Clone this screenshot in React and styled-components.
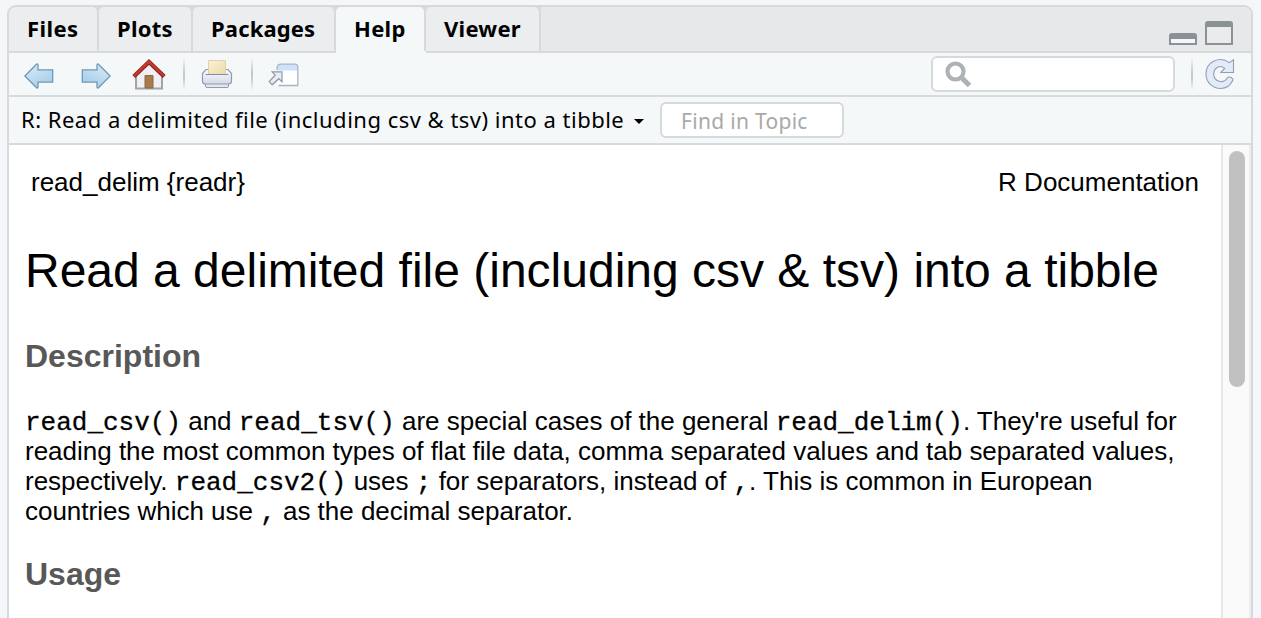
import React from "react";
import styled, { createGlobalStyle } from "styled-components";

const line = "#d6dadc";
const paper = "#f4f8f9";

const GlobalStyle = createGlobalStyle`
  *, *::before, *::after { box-sizing: border-box; }
  body { margin: 0; background: #f4f6f9; overflow: hidden; }
`;

const Screen = styled.div`
  height: 618px;
  padding: 5px 8px 0 7px;
  overflow: hidden;
  font-family: "Noto Sans", "Open Sans", sans-serif;
  color: #000;
`;

const Panel = styled.section`
  height: 640px;
  display: flex;
  flex-direction: column;
  border: 2px solid ${line};
  border-radius: 9px 9px 0 0;
  background: ${paper};
  overflow: hidden;
`;

const TabBar = styled.header`
  display: flex;
  height: 46px;
  flex: none;
  background: #e6e8ea;
  box-shadow: inset 0 -2px ${line};
`;

const Tab = styled.div`
  width: ${(p) => p.$width}px;
  height: 46px;
  padding-right: 2px;
  border-bottom: 2px solid ${(p) => (p.$active ? paper : line)};
  background: ${line};
`;

const TabFace = styled.div`
  height: 44px;
  padding-left: 18px;
  border-radius: 5px 5px 0 0;
  background: ${(p) => (p.$active ? paper : "#ebedee")};
  font-size: 22px;
  font-weight: 700;
  line-height: 42px;
  letter-spacing: ${(p) => p.$tracking}px;
  white-space: nowrap;
`;

const WindowButtons = styled.div`
  margin-left: auto;
  padding: 14px 18px 0 0;
`;

const Toolbar = styled.div`
  display: flex;
  align-items: center;
  height: 44px;
  flex: none;
  padding-left: 15px;
  padding-right: 16px;
  border-bottom: 2px solid ${line};
`;

const Icon = styled.svg`
  display: block;
  flex: none;
  margin-left: ${(p) => p.$gap || 0}px;
  margin-top: ${(p) => p.$drop || 0}px;
`;

const Divider = styled.span`
  width: 2px;
  height: 34px;
  margin-left: ${(p) => p.$gap}px;
  background: linear-gradient(#c9cccf00, #c6c9cb 45%, #c6c9cb 60%, #c9cccf00);
`;

const SearchBox = styled.div`
  display: flex;
  align-items: center;
  width: 244px;
  height: 36px;
  margin: 0 0 1px auto;
  padding-left: 12px;
  border: 2px solid ${line};
  border-radius: 6px;
  background: #fff;
`;

const TopicBar = styled.div`
  display: flex;
  align-items: center;
  height: 48px;
  flex: none;
  padding: 0 0 1px 12px;
  border-bottom: 2px solid ${line};
`;

const TopicTitle = styled.span`
  width: 613px;
  font-size: 22px;
  line-height: 30px;
  letter-spacing: 0.49px;
  padding-bottom: 1px;
  white-space: nowrap;
`;

const CaretSlot = styled.span`
  display: flex;
  margin-top: 3px;
`;

const FindBox = styled.div`
  width: 184px;
  height: 36px;
  margin-left: 16px;
  padding-left: 19px;
  border: 2px solid ${line};
  border-radius: 6px;
  background: #fff;
  color: #a9a9a9;
  font-size: 21px;
  line-height: 34px;
  letter-spacing: 0.3px;
  white-space: nowrap;
`;

const Body = styled.div`
  display: flex;
  flex: 1;
  min-height: 0;
  background: #fff;
`;

const Doc = styled.article`
  flex: 1;
  padding: 22px 22px 0 16px;
  font-family: "Liberation Sans", Arial, sans-serif;
  font-size: 26px;
  line-height: 30px;
  white-space: nowrap;
`;

const DocHeader = styled.div`
  display: flex;
  justify-content: space-between;
  padding-left: 6px;
`;

const Title = styled.h1`
  margin: 44px 0 0;
  font-size: 48px;
  font-weight: 400;
  line-height: 60px;
`;

const Heading = styled.h2`
  margin: ${(p) => p.$top}px 0 0;
  color: #585858;
  font-size: 32px;
  font-weight: 700;
  line-height: 40px;
`;

const Paragraph = styled.p`
  margin: 30px 0 0;
`;

const Line = styled.span`
  display: block;
  height: 30px;
  letter-spacing: ${(p) => p.$tracking || 0}px;
`;

const Code = styled.code`
  font-family: "Liberation Mono", monospace;
  font-size: 26px;
  line-height: 1;
  letter-spacing: 0;
  -webkit-text-stroke: 0.3px #000;
`;

const ScrollTrack = styled.div`
  width: 30px;
  padding: 6px 0 0 6px;
  border-left: 2px solid #e8e8e8;
  border-right: 2px solid #ededed;
  background: #fafafa;
`;

const ScrollThumb = styled.div`
  width: 16px;
  height: 236px;
  border-radius: 8px;
  background: #c1c1c1;
`;

const tabs = [
  { name: "Files", width: 90, tracking: 0.4 },
  { name: "Plots", width: 94, tracking: 0.25 },
  { name: "Packages", width: 143, tracking: 0.15 },
  { name: "Help", width: 90, tracking: 0.3, active: true },
  { name: "Viewer", width: 115, tracking: 0.25 },
];

function ArrowIcon({ flip, gap }) {
  return (
    <Icon $gap={gap} $drop={3} width="30" height="26" viewBox="0 0 30 26">
      <defs>
        <linearGradient id="arrowFill" x1="0" y1="0" x2="0.6" y2="1">
          <stop offset="0" stopColor="#dcecf8" />
          <stop offset="1" stopColor="#a6cdea" />
        </linearGradient>
      </defs>
      <path
        transform={flip ? "translate(30 0) scale(-1 1)" : undefined}
        d="M.9 13 12.5 1.2q1-.7 1.5.5V6.8H28.7V19.2H14V24.3q-.5 1.2-1.5.5Z"
        fill="url(#arrowFill)" stroke="#7198b5" strokeWidth="1.3"
      />
    </Icon>
  );
}

function HomeIcon({ gap }) {
  return (
    <Icon $gap={gap} $drop={2} width="34" height="32" viewBox="0 0 34 32">
      <path d="M3.5 17 17 4 30.5 17V30.5H3.5Z" fill="#f0f0f4" />
      <path d="M4 16V29.5H30V16" fill="none" stroke="#a0a5ad" strokeWidth="2" />
      <path d="M13 29V16.5H21V29Z" fill="#a67b49" stroke="#8b6840" />
      <path d="M1.8 17.6 17 3 32.2 17.6" fill="none" stroke="#8f1e19" strokeWidth="4.2" />
      <path d="M2.2 17 17 2.7 31.8 17" fill="none" stroke="#c53a31" strokeWidth="2.4" />
    </Icon>
  );
}

function PrintIcon({ gap }) {
  return (
    <Icon $gap={gap} width="32" height="30" viewBox="0 0 32 30">
      <defs>
        <linearGradient id="printerFill" x1="0" y1="0" x2="0" y2="1">
          <stop offset="0" stopColor="#fbfcff" />
          <stop offset="1" stopColor="#d3d9e5" />
        </linearGradient>
        <linearGradient id="sheetFill" x1="0" y1="0" x2="1" y2="1">
          <stop offset="0" stopColor="#fbf2d8" />
          <stop offset="1" stopColor="#eadbac" />
        </linearGradient>
      </defs>
      <path d="M4.5 24H27.5V27Q27.5 28.5 26 28.5H6Q4.5 28.5 4.5 27Z" fill="#e3e8ef" stroke="#929aae" />
      <path d="M5 10.5H27L30.5 14.5V22Q30.5 25 27.5 25H4.5Q1.5 25 1.5 22V14.5Z" fill="url(#printerFill)" stroke="#929aae" strokeWidth="1.2" />
      <path d="M7.5 15V1.5H24.5V15" fill="url(#sheetFill)" stroke="#e0d2a8" />
      <path d="M4.5 15.5H27.5" stroke="#858da2" />
    </Icon>
  );
}

function PopoutIcon({ gap }) {
  return (
    <Icon $gap={gap} $drop={3} width="31" height="26" viewBox="0 0 31 26">
      <path d="M9 2.5Q10.5 1 13 1H27Q29.7 1 29.7 4V22.5H9Z" fill="#fff" />
      <path d="M9 7.5V4.5Q10 1.5 13 1.5H27Q29.4 1.5 29.4 4V7.5Z" fill="#cde2fa" />
      <path d="M9 7V5Q9.5 1.2 13 1.2H26.5Q29.8 1.2 29.8 4.2V22.5H10.5" fill="none" stroke="#a5b5c4" strokeWidth="1.3" />
      <path d="M4.2 8.8H14V18.8L10.8 15.7 4.2 21.8 1.2 18.5 7.2 12.2Z" fill="#e9ebf5" stroke="#9299a7" strokeWidth="1.2" />
    </Icon>
  );
}

function SearchIcon() {
  return (
    <Icon $drop={2} width="27" height="27" viewBox="0 0 27 27">
      <circle cx="10.5" cy="10.5" r="8" fill="none" stroke="#adb2b4" strokeWidth="4.2" />
      <path d="m16 16 8.5 8.5" stroke="#adb2b4" strokeWidth="5.2" />
    </Icon>
  );
}

function RefreshIcon({ gap }) {
  return (
    <Icon $gap={gap} width="30" height="32" viewBox="0 0 30 32">
      <path
        d="M24.2 4.6 28.5 1.7V14.5H15.8L19.7 10.4C14.5 6 8.7 10.5 8.7 16.1C8.7 23.8 18.8 26.2 22.2 20.1C24.2 17.5 28.7 20.1 27.7 22.6C25.2 28.1 20.5 30.5 15.6 30.5C7.8 30.5 1 24.3 1 16.2C1 3.5 14.8-2.4 24.2 4.6Z"
        fill="#e2ebfa" stroke="#959daf" strokeWidth="1.1"
      />
    </Icon>
  );
}

function WindowIcons() {
  return (
    <Icon width="64" height="24" viewBox="0 0 64 24">
      <rect x="1" y="13" width="26" height="10" fill="#f4f7f8" stroke="#8a9295" strokeWidth="2" />
      <path d="M0 18V12H28V18Z" fill="#e6e8ea" />
      <path d="M0 18V15Q0 12 3 12H25Q28 12 28 15V18Z" fill="#8a9295" />
      <path d="M37 4V23H63V4" fill="#e9ebec" stroke="#8a9295" strokeWidth="2" />
      <path d="M36 6V3Q36 0 39 0H61Q64 0 64 3V6Z" fill="#8a9295" />
    </Icon>
  );
}

function Caret() {
  return (
    <svg width="10" height="5" viewBox="0 0 10 5">
      <path d="M0 0H10L5 5Z" fill="#000" />
    </svg>
  );
}

export default function App() {
  return (
    <>
      <GlobalStyle />
      <Screen>
        <Panel>
          <TabBar>
            {tabs.map((t) => (
              <Tab key={t.name} $width={t.width} $active={t.active}>
                <TabFace $tracking={t.tracking} $active={t.active}>{t.name}</TabFace>
              </Tab>
            ))}
            <WindowButtons><WindowIcons /></WindowButtons>
          </TabBar>
          <Toolbar>
            <ArrowIcon />
            <ArrowIcon flip gap={27} />
            <HomeIcon gap={21} />
            <Divider $gap={17} />
            <PrintIcon gap={16} />
            <Divider $gap={18} />
            <PopoutIcon gap={15} />
            <SearchBox><SearchIcon /></SearchBox>
            <Divider $gap={16} />
            <RefreshIcon gap={12} />
          </Toolbar>
          <TopicBar>
            <TopicTitle>R: Read a delimited file (including csv &amp; tsv) into a tibble</TopicTitle>
            <CaretSlot><Caret /></CaretSlot>
            <FindBox>Find in Topic</FindBox>
          </TopicBar>
          <Body>
            <Doc>
              <DocHeader>
                <span>read_delim {"{readr}"}</span>
                <span>R Documentation</span>
              </DocHeader>
              <Title>Read a delimited file (including csv &amp; tsv) into a tibble</Title>
              <Heading $top={35}>Description</Heading>
              <Paragraph>
                <Line $tracking={-0.02}>
                  <Code>read_csv()</Code> and <Code>read_tsv()</Code> are special cases of the general <Code>read_delim()</Code>. They're useful for
                </Line>
                <Line $tracking={-0.01}>reading the most common types of flat file data, comma separated values and tab separated values,</Line>
                <Line>
                  respectively. <Code>read_csv2()</Code> uses <Code>;</Code> for separators, instead of <Code>,</Code>. This is common in European
                </Line>
                <Line $tracking={-0.02}>
                  countries which use <Code>,</Code> as the decimal separator.
                </Line>
              </Paragraph>
              <Heading $top={28}>Usage</Heading>
            </Doc>
            <ScrollTrack><ScrollThumb /></ScrollTrack>
          </Body>
        </Panel>
      </Screen>
    </>
  );
}
